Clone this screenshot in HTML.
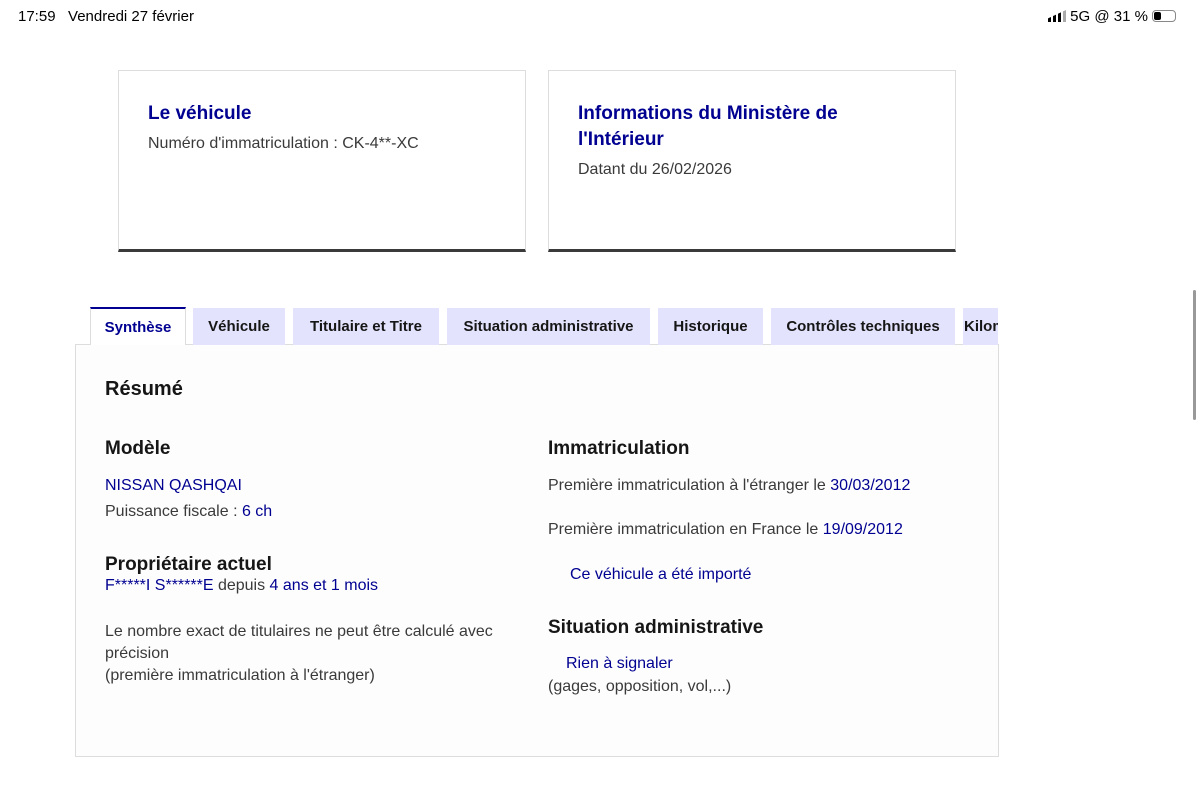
<!DOCTYPE html>
<html><head><meta charset="utf-8"><style>
*{margin:0;padding:0;box-sizing:border-box}
body{width:1200px;height:788px;background:#fff;font-family:"Liberation Sans",sans-serif;position:relative;overflow:hidden;color:#3a3a3a}
.a{position:absolute;white-space:nowrap}
.card{position:absolute;top:70px;height:182px;border:1px solid #ddd;border-bottom:3px solid #3a3a3a;width:408px}
.ct{color:#000091;font-weight:bold;font-size:19px;line-height:26px}
.tab{position:absolute;top:308px;height:37px;background:#e3e3fd;font-weight:bold;font-size:15px;color:#161616;text-align:center;line-height:37px}
.blue{color:#000091}
h3{font-size:19px;color:#161616;font-weight:bold}
.t{font-size:16px}
</style></head><body>
<div class="a" style="left:18px;top:8px;font-size:15px;color:#000">17:59&nbsp;&nbsp; Vendredi 27 février</div>
<div class="a" style="left:1048px;top:8px;font-size:15px;color:#000">
<span style="display:inline-block;width:18px;height:12px;vertical-align:-1px;background:linear-gradient(90deg,#000 3px,transparent 3px 5px,#000 5px 8px,transparent 8px 10px,#000 10px 13px,transparent 13px 15px,#aaa 15px 18px);clip-path:polygon(0 70%,18px 0,18px 100%,0 100%)"></span> 5G @ 31 % <span style="display:inline-block;width:24px;height:12px;border:1px solid #888;border-radius:4px;vertical-align:-1px;position:relative"><span style="position:absolute;left:1px;top:1px;width:7px;height:8px;background:#000;border-radius:2px"></span></span></div>
<div style="position:absolute;left:1193px;top:290px;width:3px;height:130px;background:#999;border-radius:2px"></div>

<div class="card" style="left:118px"><div class="a ct" style="left:29px;top:30px">Le véhicule</div><div class="a t" style="left:29px;top:64px">Numéro d'immatriculation : CK-4**-XC</div></div>
<div class="card" style="left:548px"><div class="a ct" style="left:29px;top:30px;white-space:normal;width:300px">Informations du Ministère de l'Intérieur</div><div class="a t" style="left:29px;top:90px">Datant du 26/02/2026</div></div>

<div style="position:absolute;left:75px;top:344px;width:924px;height:413px;border:1px solid #ddd;background:#fdfdfd"></div>
<div class="tab" style="left:90px;width:96px;background:#fff;border-top:2px solid #000091;border-left:1px solid #ddd;border-right:1px solid #ddd;color:#000091;height:38px;top:307px">Synthèse</div>
<div class="tab" style="left:193px;width:92px">Véhicule</div>
<div class="tab" style="left:293px;width:146px">Titulaire et Titre</div>
<div class="tab" style="left:447px;width:203px">Situation administrative</div>
<div class="tab" style="left:658px;width:105px">Historique</div>
<div class="tab" style="left:771px;width:184px">Contrôles techniques</div>
<div class="tab" style="left:963px;width:35px;overflow:hidden;text-align:left;padding-left:1px">Kilométrage</div>

<h3 class="a" style="left:105px;top:378px;font-size:20px">Résumé</h3>
<h3 class="a" style="left:105px;top:438px">Modèle</h3>
<div class="a t blue" style="left:105px;top:477px">NISSAN QASHQAI</div>
<div class="a t" style="left:105px;top:503px">Puissance fiscale : <span class="blue">6 ch</span></div>
<h3 class="a" style="left:105px;top:554px">Propriétaire actuel</h3>
<div class="a t" style="left:105px;top:577px"><span class="blue">F*****I S******E</span> depuis <span class="blue">4 ans et 1 mois</span></div>
<div class="a t" style="left:105px;top:621px;line-height:22px">Le nombre exact de titulaires ne peut être calculé avec<br>précision<br>(première immatriculation à l'étranger)</div>

<h3 class="a" style="left:548px;top:438px">Immatriculation</h3>
<div class="a t" style="left:548px;top:477px">Première immatriculation à l'étranger le <span class="blue">30/03/2012</span></div>
<div class="a t" style="left:548px;top:521px">Première immatriculation en France le <span class="blue">19/09/2012</span></div>
<div class="a t blue" style="left:570px;top:566px">Ce véhicule a été importé</div>
<h3 class="a" style="left:548px;top:617px">Situation administrative</h3>
<div class="a t blue" style="left:566px;top:655px">Rien à signaler</div>
<div class="a t" style="left:548px;top:678px">(gages, opposition, vol,...)</div>
</body></html>
